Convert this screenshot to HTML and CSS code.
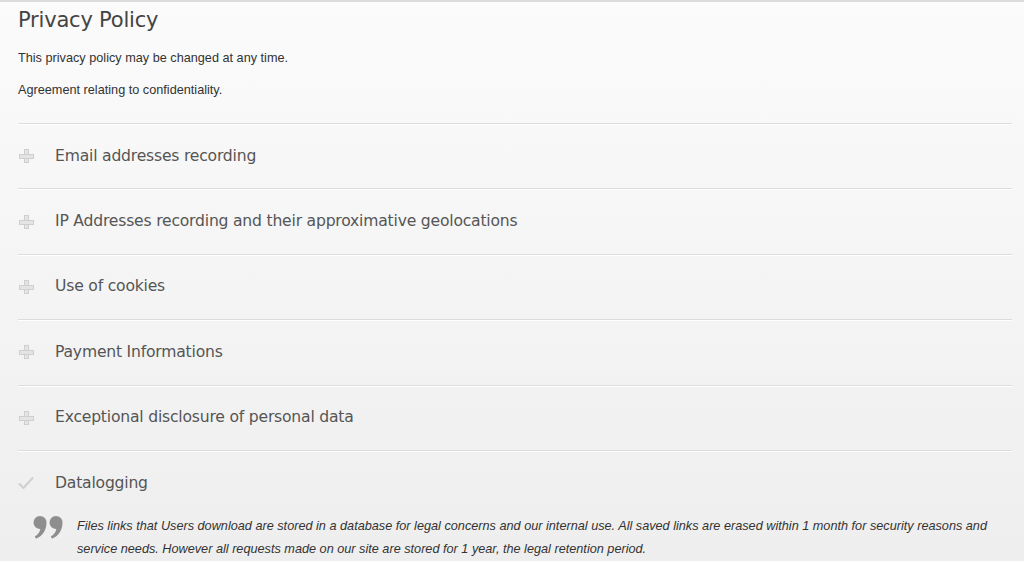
FILE: index.html
```html
<!DOCTYPE html>
<html lang="en">
<head>
<meta charset="utf-8">
<title>Privacy Policy</title>
<link rel="stylesheet" href="styles.css">
</head>
<body>
<div class="page">
  <h1 class="title">Privacy Policy</h1>
  <p class="intro">This privacy policy may be changed at any time.</p>
  <p class="intro">Agreement relating to confidentiality.</p>
  <ul class="accordion">
    <li class="item">
      <div class="head"><span class="icon plus"></span><span class="label">Email addresses recording</span></div>
    </li>
    <li class="item">
      <div class="head"><span class="icon plus"></span><span class="label">IP Addresses recording and their approximative geolocations</span></div>
    </li>
    <li class="item">
      <div class="head"><span class="icon plus"></span><span class="label">Use of cookies</span></div>
    </li>
    <li class="item">
      <div class="head"><span class="icon plus"></span><span class="label">Payment Informations</span></div>
    </li>
    <li class="item">
      <div class="head"><span class="icon plus"></span><span class="label">Exceptional disclosure of personal data</span></div>
    </li>
    <li class="item open">
      <div class="head">
        <svg class="icon check" viewBox="0 0 16 14" width="16" height="14"><path d="M1.5 8 L5.5 12 L14.5 2" fill="none" stroke="#cfcfcf" stroke-width="2" stroke-linecap="round" stroke-linejoin="round"/></svg>
        <span class="label">Datalogging</span>
      </div>
      <div class="body">
        <svg class="quote" viewBox="0 0 30 24" width="30" height="24" aria-hidden="true">
          <g fill="#8e8e8e">
            <path d="M13.5 7.5 C13.5 15 9.5 21 3 23.8 L1.8 21.6 C5 19.8 6.8 17.2 7.3 14 A6.5 6.5 0 1 1 13.5 7.5 Z"/>
            <path transform="translate(16 0)" d="M13.5 7.5 C13.5 15 9.5 21 3 23.8 L1.8 21.6 C5 19.8 6.8 17.2 7.3 14 A6.5 6.5 0 1 1 13.5 7.5 Z"/>
          </g>
        </svg>
        <p class="text">Files links that Users download are stored in a database for legal concerns and our internal use. All saved links are erased within 1 month for security reasons and service needs. However all requests made on our site are stored for 1 year, the legal retention period.</p>
      </div>
    </li>
  </ul>
</div>
</body>
</html>
```
FILE: styles.css
```css
html, body {
  margin: 0;
  padding: 0;
  height: 100%;
}
body {
  background: linear-gradient(#fbfbfb, #eeeeee) no-repeat;
  background-color: #eeeeee;
  border-top: 2px solid #dcdcdc;
  box-sizing: border-box;
  font-family: "Liberation Sans", Arial, sans-serif;
  color: #333;
  overflow: hidden;
}
.page {
  padding: 0 12px 0 18px;
}
.title {
  margin: 5px 0 0;
  font-family: "DejaVu Sans", sans-serif;
  font-weight: normal;
  font-size: 21px;
  line-height: 26px;
  color: #444;
  letter-spacing: -0.2px;
}
.intro {
  margin: 18px 0 0;
  font-size: 12.7px;
  line-height: 15px;
  color: #333;
}
.intro + .intro {
  margin-top: 17px;
}
.accordion {
  list-style: none;
  margin: 25px 0 0;
  padding: 0;
}
.item {
  border-top: 1px solid #dcdcdc;
  box-shadow: inset 0 1px 0 #ffffff;
}
.head {
  height: 64.4px;
  display: flex;
  align-items: center;
}
.label {
  font-family: "DejaVu Sans", sans-serif;
  font-size: 15.6px;
  color: #555;
  letter-spacing: -0.2px;
  margin-left: 21px;
  padding-bottom: 1px;
}
.icon {
  flex: none;
  width: 16px;
  height: 16px;
  position: relative;
}
.plus::before,
.plus::after {
  content: "";
  position: absolute;
  background: #e4e4e4;
  border: 1px solid #cfcfcf;
  box-sizing: border-box;
}
.plus::before {
  left: 6px;
  top: 1px;
  width: 5px;
  height: 14px;
}
.plus::after {
  left: 1px;
  top: 6px;
  width: 15px;
  height: 5px;
}
.check {
  height: 14px;
}
.body {
  display: flex;
  align-items: flex-start;
  padding: 0 0 0 15px;
}
.quote {
  flex: none;
  width: 30px;
  height: 24px;
  margin-top: 0;
}
.text {
  margin: 0 0 0 14px;
  font-style: italic;
  font-size: 12.7px;
  line-height: 23px;
  color: #333;
}
```
